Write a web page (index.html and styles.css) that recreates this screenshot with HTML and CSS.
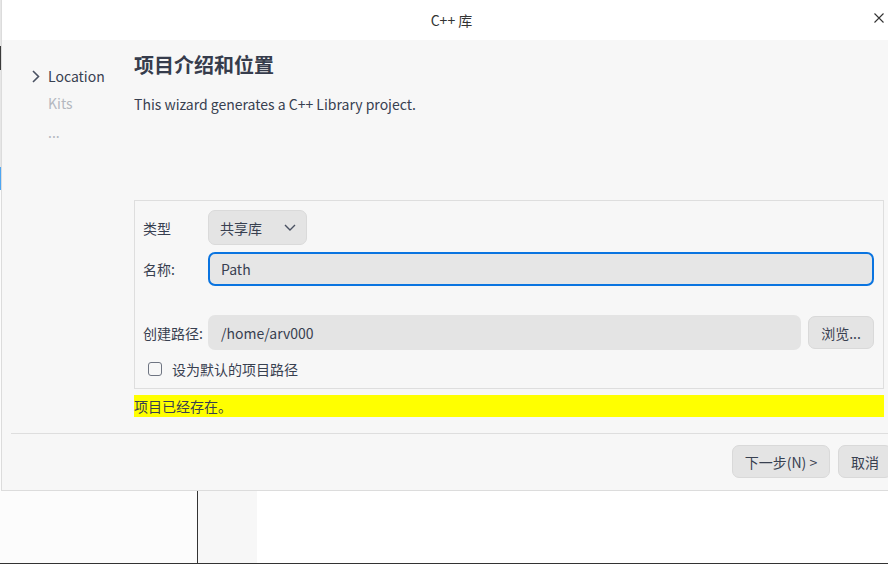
FILE: index.html
```html
<!DOCTYPE html>
<html lang="zh">
<head>
<meta charset="utf-8">
<title>C++ 库</title>
<link rel="stylesheet" href="styles.css">
</head>
<body>
<div class="desktop">
  <div class="edge">
    <div class="edge-gap1"></div>
    <div class="edge-dark"></div>
    <div class="edge-gap2"></div>
    <div class="edge-blue"></div>
  </div>
  <div class="panel-left"></div>
  <div class="panel-line"></div>
  <div class="panel-mid"></div>
  <div class="panel-right"></div>
</div>

<div class="window">
  <div class="titlebar">
    <span class="title">C++ 库</span>
    <svg class="close" width="10" height="10" viewBox="0 0 10 10"><path d="M0.5 0.5 L9.5 9.5 M9.5 0.5 L0.5 9.5" stroke="#333" stroke-width="1.1" fill="none"/></svg>
  </div>
  <div class="body">
    <div class="top">
      <ul class="steps">
        <li class="step current"><svg class="chev" width="8" height="13" viewBox="0 0 8 13"><path d="M1 1 L6.5 6.5 L1 12" stroke="#4a5162" stroke-width="1.6" fill="none"/></svg><span>Location</span></li>
        <li class="step">Kits</li>
        <li class="step dots">...</li>
      </ul>
      <div class="main">
        <h1 class="heading">项目介绍和位置</h1>
        <p class="desc">This wizard generates a C++ Library project.</p>
        <div class="group">
          <label class="lbl">类型</label>
          <div class="combo"><span>共享库</span><svg width="12" height="7" viewBox="0 0 12 7"><path d="M1 1 L6 6 L11 1" stroke="#4a5162" stroke-width="1.4" fill="none"/></svg></div>
          <div></div>

          <label class="lbl">名称:</label>
          <div class="input focus span2">Path</div>

          <div class="spacer"></div>

          <label class="lbl">创建路径:</label>
          <div class="input">/home/arv000</div>
          <button class="btn browse">浏览...</button>

          <div class="check-row">
            <span class="checkbox"></span>
            <span>设为默认的项目路径</span>
          </div>
        </div>
        <div class="warning">项目已经存在。</div>
      </div>
    </div>
    <div class="sep"></div>
    <div class="buttons">
      <button class="btn next">下一步(N) &gt;</button>
      <button class="btn cancel">取消</button>
    </div>
  </div>
</div>
</body>
</html>
```

FILE: styles.css
```css
* { box-sizing: border-box; }
html, body {
  margin: 0;
  padding: 0;
  width: 888px;
  height: 564px;
  overflow: hidden;
  font-family: "Noto Sans CJK SC", "Noto Sans", sans-serif;
  font-size: 14px;
  color: #384050;
}
.desktop {
  display: flex;
  height: 564px;
  border-bottom: 1px solid #333;
}
.edge {
  width: 1px;
  display: flex;
  flex-direction: column;
  background: #fcfcfc;
}
.edge-gap1 { height: 46px; background: #e6e6e6; }
.edge-dark { height: 24px; background: #3a3a3a; }
.edge-gap2 { height: 97px; background: #e6e6e6; }
.edge-blue { height: 23px; background: #4ea6f2; }
.panel-left { width: 196px; background: #fcfcfc; }
.panel-line { width: 1px; background: #333; }
.panel-mid { width: 59px; background: #f7f7f7; }
.panel-right { flex: 1; background: #fff; }

.window {
  position: absolute;
  left: 1px;
  top: 0;
  width: 900px;
  height: 491px;
  background: #f7f7f7;
  border-left: 1px solid #dcdcdc;
  border-bottom: 1px solid #dcdcdc;
  display: flex;
  flex-direction: column;
}
.titlebar {
  height: 40px;
  background: #fff;
  display: flex;
  align-items: center;
  justify-content: center;
  position: relative;
}
.title { font-size: 14px; color: #333; line-height: 20px; }
.close { position: absolute; right: 17px; top: 13px; }

.body {
  flex: 1;
  display: flex;
  flex-direction: column;
}
.top { display: flex; }
.steps {
  list-style: none;
  margin: 0;
  padding: 23px 0 0 29px;
  width: 132px;
}
.step {
  height: 27px;
  line-height: 27px;
  padding-left: 17px;
  color: #b4b8c0;
  position: relative;
}
.step.dots { line-height: 30px; }
.step.current { color: #384050; }
.chev { position: absolute; left: 1px; top: 7px; }

.main {
  flex: 1;
  padding: 11px 17px 0 0;
}
.heading {
  margin: 0;
  font-size: 20px;
  font-weight: bold;
  line-height: 28px;
  color: #363c4c;
}
.desc {
  margin: 15px 0 0;
  line-height: 20px;
}
.group {
  margin-top: 86px;
  border: 1px solid #dedede;
  padding: 9px 9px 7px 8px;
  display: grid;
  grid-template-columns: 58px 1fr auto;
  grid-template-rows: 35px 34px 15px 35px 24px;
  column-gap: 7px;
  row-gap: 7px;
  align-items: center;
}
.lbl { line-height: 20px; white-space: nowrap; }
.combo {
  width: 99px;
  height: 35px;
  background: #e4e4e4;
  border: 1px solid #dadada;
  border-radius: 7px;
  display: flex;
  align-items: center;
  justify-content: space-between;
  padding: 0 10px 0 11px;
}
.input {
  height: 35px;
  background: #e4e4e4;
  border-radius: 7px;
  display: flex;
  align-items: center;
  padding-left: 13px;
}
.input.focus {
  height: 34px;
  border: 2px solid #0a74e0;
  background: #e6e6e6;
  padding-left: 11px;
}
.span2 { grid-column: 2 / 4; }
.spacer { grid-column: 1 / 4; }
.btn {
  font-family: inherit;
  font-size: 14px;
  color: #384050;
  background: #e4e4e4;
  border: 1px solid #d9d9d9;
  border-radius: 7px;
  height: 33px;
  padding: 0;
}
.browse { width: 66px; }
.check-row {
  grid-column: 1 / 4;
  display: flex;
  align-items: center;
  gap: 10px;
  padding-left: 5px;
}
.checkbox {
  width: 14px;
  height: 14px;
  border: 1.5px solid #6f7582;
  border-radius: 3px;
  background: #f7f7f7;
}
.warning {
  margin-top: 6px;
  height: 22px;
  line-height: 22px;
  background: #ffff00;
}
.sep {
  margin: 16px 0 0 9px;
  height: 1px;
  background: #dedede;
}
.buttons {
  display: flex;
  justify-content: flex-end;
  gap: 8px;
  padding: 11px 9px 0 0;
}
.next { width: 98px; }
.cancel { width: 54px; }
```
